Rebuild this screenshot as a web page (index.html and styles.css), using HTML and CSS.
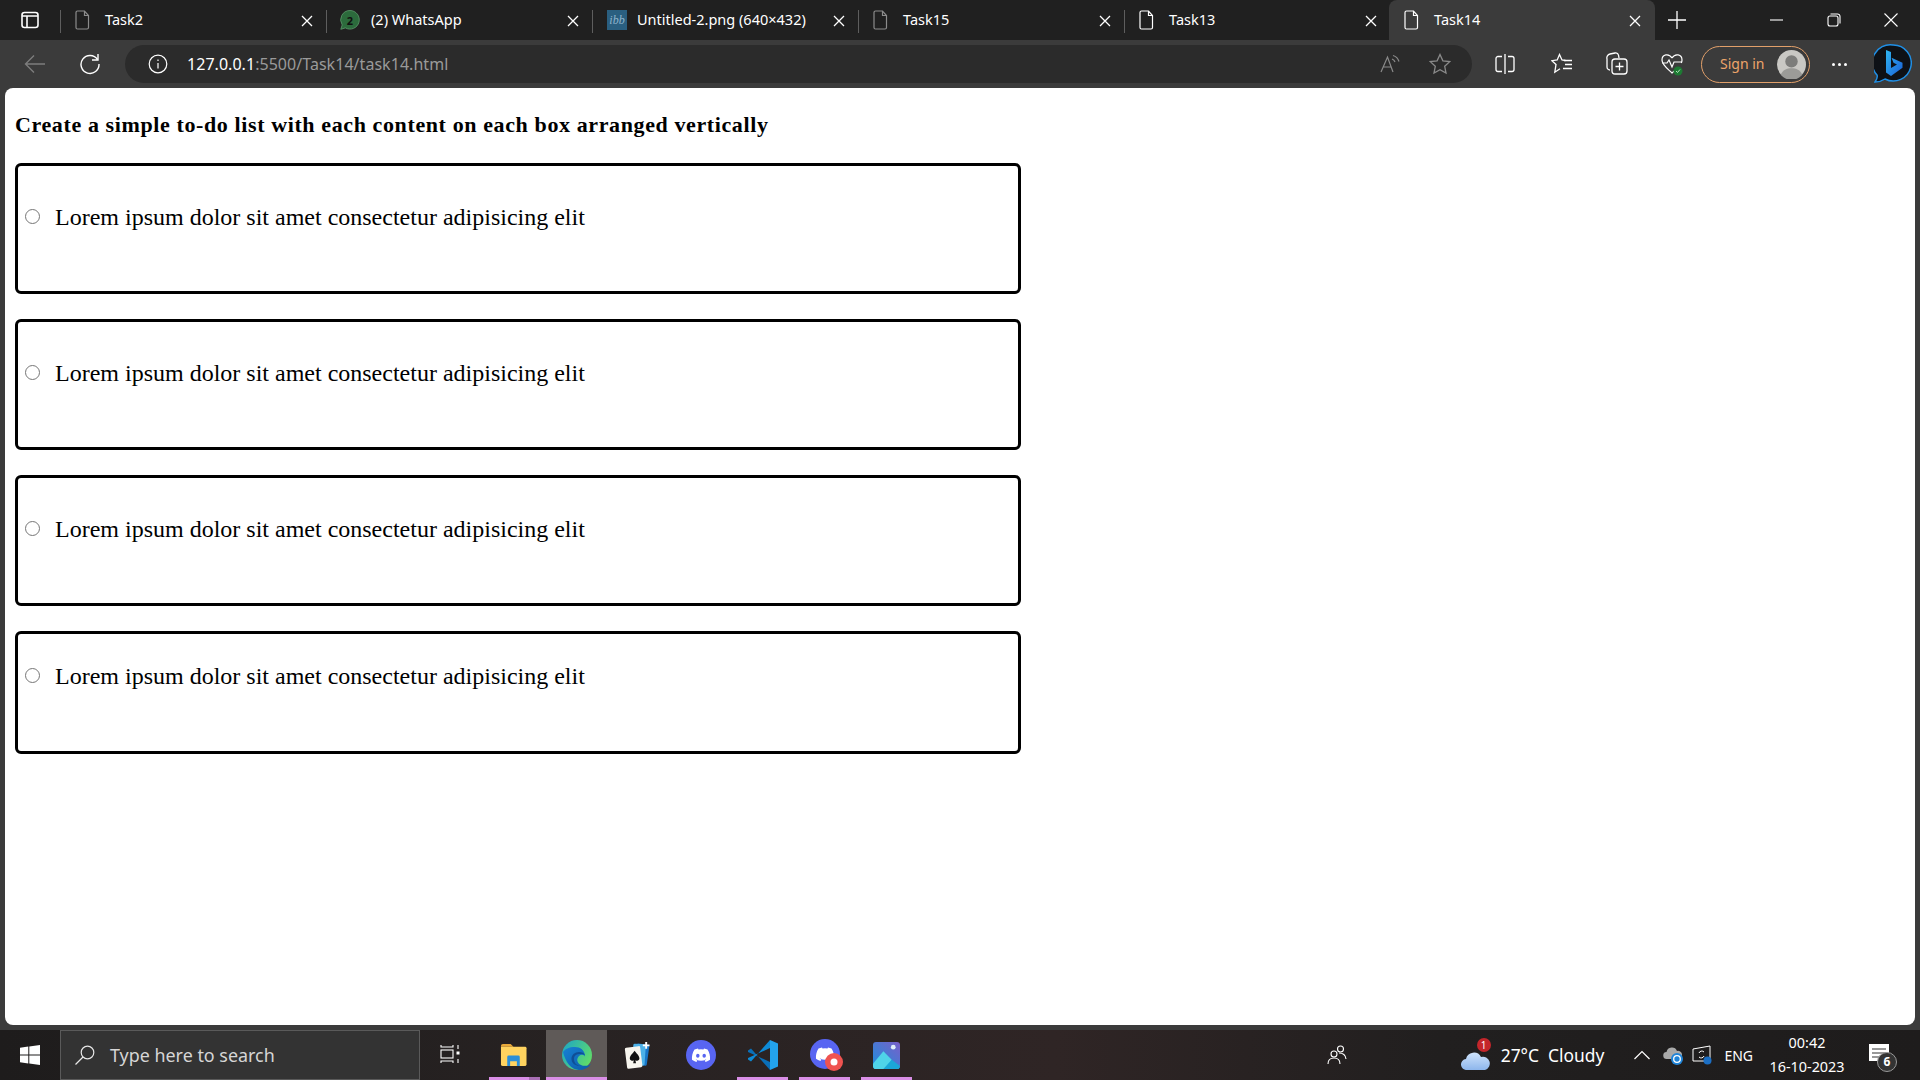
FILE: index.html
```html
<!DOCTYPE html>
<html lang="en">
<head>
<meta charset="utf-8">
<title>Task14</title>
<link rel="stylesheet" href="styles.css">
</head>
<body>
<div class="screen">
  <div class="tabstrip">
    <div class="strip-start">
      <svg class="ico20" viewBox="0 0 20 20" fill="none" stroke="#fff" stroke-width="1.6"><rect x="2" y="2.5" width="16" height="15" rx="2.5"/><path d="M2 6h16M7 6v11.5" /></svg>
    </div>
    <div class="tab">
      <svg class="tab-ico dim" viewBox="0 0 16 20" fill="none" stroke="currentColor" stroke-width="1.2"><path d="M2.500 1h7l4 4.500V17.500a1.500 1.500 0 0 1-1.500 1.500H2.500A1.500 1.500 0 0 1 1 17.500V2.500A1.500 1.500 0 0 1 2.500 1zM9.500 1v4.500h4"/></svg>
      <span class="tab-title">Task2</span>
      <svg class="tab-x" viewBox="0 0 12 12" stroke="#fff" stroke-width="1.300"><path d="M1 1l10 10M11 1L1 11"/></svg>
    </div>
    <div class="tab">
      <svg class="tab-ico wide" viewBox="0 0 20 20"><path d="M10 .5a9.300 9.300 0 1 1-4.600 17.400L.8 19.300l1.400-4.400A9.300 9.300 0 0 1 10 .5z" fill="#2c6b3c" stroke="#5d9a6c" stroke-width=".8"/><text x="10" y="14.500" class="wa-num">2</text></svg>
      <span class="tab-title">(2) WhatsApp</span>
      <svg class="tab-x" viewBox="0 0 12 12" stroke="#fff" stroke-width="1.300"><path d="M1 1l10 10M11 1L1 11"/></svg>
    </div>
    <div class="tab">
      <span class="ibb">ibb</span>
      <span class="tab-title">Untitled-2.png (640×432)</span>
      <svg class="tab-x" viewBox="0 0 12 12" stroke="#fff" stroke-width="1.300"><path d="M1 1l10 10M11 1L1 11"/></svg>
    </div>
    <div class="tab">
      <svg class="tab-ico dim" viewBox="0 0 16 20" fill="none" stroke="currentColor" stroke-width="1.200"><path d="M2.500 1h7l4 4.500V17.500a1.500 1.500 0 0 1-1.500 1.500H2.500A1.500 1.500 0 0 1 1 17.500V2.500A1.500 1.500 0 0 1 2.500 1zM9.500 1v4.500h4"/></svg>
      <span class="tab-title">Task15</span>
      <svg class="tab-x" viewBox="0 0 12 12" stroke="#fff" stroke-width="1.300"><path d="M1 1l10 10M11 1L1 11"/></svg>
    </div>
    <div class="tab tab-last">
      <svg class="tab-ico" viewBox="0 0 16 20" fill="none" stroke="currentColor" stroke-width="1.200"><path d="M2.500 1h7l4 4.500V17.500a1.500 1.500 0 0 1-1.500 1.500H2.500A1.500 1.500 0 0 1 1 17.500V2.500A1.500 1.500 0 0 1 2.500 1zM9.500 1v4.500h4"/></svg>
      <span class="tab-title">Task13</span>
      <svg class="tab-x" viewBox="0 0 12 12" stroke="#fff" stroke-width="1.300"><path d="M1 1l10 10M11 1L1 11"/></svg>
    </div>
    <div class="tab tab-active">
      <svg class="tab-ico" viewBox="0 0 16 20" fill="none" stroke="currentColor" stroke-width="1.200"><path d="M2.500 1h7l4 4.500V17.500a1.500 1.500 0 0 1-1.500 1.500H2.500A1.500 1.500 0 0 1 1 17.500V2.500A1.500 1.500 0 0 1 2.500 1zM9.500 1v4.500h4"/></svg>
      <span class="tab-title">Task14</span>
      <svg class="tab-x" viewBox="0 0 12 12" stroke="#fff" stroke-width="1.300"><path d="M1 1l10 10M11 1L1 11"/></svg>
    </div>
    <svg class="new-tab" viewBox="0 0 18 18" stroke="#fff" stroke-width="1.300"><path d="M9 0v18M0 9h18"/></svg>
    <div class="win-controls">
      <svg class="win-btn" viewBox="0 0 14 14" stroke="#fff" stroke-width="1.100"><path d="M0 7h13"/></svg>
      <svg class="win-btn" viewBox="0 0 14 14" fill="none" stroke="#fff" stroke-width="1.100"><rect x="1" y="3" width="10" height="10" rx="2"/><path d="M3.500 1h7a2.500 2.500 0 0 1 2.500 2.500v7"/></svg>
      <svg class="win-btn" viewBox="0 0 14 14" stroke="#fff" stroke-width="1.100"><path d="M.5.500l13 13M13.500.500l-13 13"/></svg>
    </div>
  </div>

  <div class="toolbar">
    <svg class="back" viewBox="0 0 22 20" fill="none" stroke="#7d7d7d" stroke-width="1.400"><path d="M21 10H1.500M10 1.500L1.500 10l8.500 8.500"/></svg>
    <svg class="reload" viewBox="0 0 22 22" fill="none" stroke="#fff" stroke-width="1.400"><path d="M18.500 6.500A9 9 0 1 0 20 11"/><path d="M19 1v6h-6"/></svg>
    <div class="address">
      <svg class="info" viewBox="0 0 20 20" fill="none" stroke="#fff" stroke-width="1.200"><circle cx="10" cy="10" r="8.800"/><path d="M10 9v5.500M10 5.500v1.500"/></svg>
      <span class="url"><span class="url-host">127.0.0.1</span>:5500/Task14/task14.html</span>
      <span class="address-end">
        <svg class="read" viewBox="0 0 22 20" fill="none" stroke="#8a8a8a" stroke-width="1.200"><path d="M1 18L7.500 3 13 18M3.500 13h8"/><path d="M12 5a5 5 0 0 1 3 3M13 1.500a9 9 0 0 1 6 6"/></svg>
        <svg class="star" viewBox="0 0 22 22" fill="none" stroke="#8a8a8a" stroke-width="1.300"><path d="M11 1.500l2.900 6.300 6.800.8-5 4.700 1.300 6.800L11 16.700l-6 3.400 1.300-6.800-5-4.700 6.800-.8z"/></svg>
      </span>
    </div>
    <svg class="tool split" viewBox="0 0 20 22" fill="none" stroke="#fff" stroke-width="1.300"><path d="M7 3.500H3a2 2 0 0 0-2 2v11a2 2 0 0 0 2 2h4M13 3.500h4a2 2 0 0 1 2 2v11a2 2 0 0 1-2 2h-4M10 1v20"/></svg>
    <svg class="tool fav" viewBox="0 0 22 22" fill="none" stroke="#fff" stroke-width="1.300"><path d="M14.500 7.500L11 7 8.500 1.500 6.200 7 1 7.700l4 3.700-1.200 7.800 5.200-3.400"/><path d="M13 7.500h8M14 11.500h7M12 15.500h9"/></svg>
    <svg class="tool coll" viewBox="0 0 22 24" fill="none" stroke="#fff" stroke-width="1.300"><path d="M4 18a3 3 0 0 1-3-3V7a4 4 0 0 1 3-5l5-1a3 3 0 0 1 3.500 2.200L13 6"/><rect x="6" y="7" width="15" height="15" rx="3"/><path d="M13.500 10.500v8M9.500 14.500h8"/></svg>
    <svg class="tool health" viewBox="0 0 22 24"><path d="M11 6C8 1 1 2 1 8c0 5 6 9 10 13 1-1 2-2 3-2.500M11 6c3-5 10-4 10 2 0 1-.2 2-.7 3" fill="none" stroke="#fff" stroke-width="1.200"/><path d="M1 11h5l2-3 3 7 2-5h8" fill="none" stroke="#fff" stroke-width="1.200"/><circle cx="17" cy="19" r="4.500" fill="#1d7a33"/><path d="M15 19l1.500 1.500 2.500-3" fill="none" stroke="#bfe8c6" stroke-width=".9"/></svg>
    <div class="signin">
      <span class="signin-label">Sign in</span>
      <span class="avatar"><svg viewBox="0 0 28 28"><circle cx="14" cy="14" r="14" fill="#c9c8c4"/><circle cx="14" cy="11" r="6" fill="#7d7d7b"/><path d="M3.500 24c2-5 6-6.500 10.500-6.500S22.500 19 24.500 24A14 14 0 0 1 3.500 24z" fill="#9b9b98"/></svg></span>
    </div>
    <span class="dots"><i></i><i></i><i></i></span>
    <svg class="bing" viewBox="0 0 38 40">
      <defs><linearGradient id="bingGrad" x1="0" y1="0" x2="1" y2="1"><stop offset="0" stop-color="#2fb6f2"/><stop offset="1" stop-color="#1a5fd6"/></linearGradient></defs>
      <path d="M19 1a18 18 0 1 1-8 34c-3 2-6 3-10 3 2-3 3-5 2-7A18 18 0 0 1 19 1z" fill="#0e1116" stroke="#1f8fe6" stroke-width="1.500"/>
      <path d="M12 6l5 2v16l6-3.500-3.500-1.700-2-5 11 5v5L17 32l-5-3.500z" fill="url(#bingGrad)"/>
    </svg>
  </div>

  <div class="page-wrap">
    <main class="page">
      <h3 class="heading">Create a simple to-do list with each content on each box arranged vertically</h3>
      <div class="todo-list">
        <label class="todo"><input class="todo-radio" type="radio" name="t1"><span>Lorem ipsum dolor sit amet consectetur adipisicing elit</span></label>
        <label class="todo"><input class="todo-radio" type="radio" name="t2"><span>Lorem ipsum dolor sit amet consectetur adipisicing elit</span></label>
        <label class="todo"><input class="todo-radio" type="radio" name="t3"><span>Lorem ipsum dolor sit amet consectetur adipisicing elit</span></label>
        <label class="todo todo-last"><input class="todo-radio" type="radio" name="t4"><span>Lorem ipsum dolor sit amet consectetur adipisicing elit</span></label>
      </div>
    </main>
  </div>

  <footer class="taskbar">
    <div class="start">
      <svg class="winlogo" viewBox="0 0 20 20" fill="#fff"><path d="M0 2.800L8.300 1.600v7.900H0zM9.300 1.500L20 0v9.500H9.300zM0 10.500h8.300v7.900L0 17.200zM9.300 10.500H20V20L9.300 18.500z"/></svg>
    </div>
    <div class="search">
      <svg class="search-ico" viewBox="0 0 20 20" fill="none" stroke="#e8e8e8" stroke-width="1.200"><circle cx="12.500" cy="7.500" r="6.300"/><path d="M8 12L.5 19.500"/></svg>
      <span class="search-text">Type here to search</span>
    </div>
    <svg class="taskview" viewBox="0 0 20 20" fill="none" stroke="#fff" stroke-width="1.100"><path d="M1 1v2h12V1M1 19v-2h12v2"/><rect x="1" y="6" width="12" height="8"/><path d="M18 1v4M18 15v4"/><rect x="16.500" y="7.500" width="3" height="3" fill="#fff" stroke="none"/></svg>

    <div class="apps">
      <div class="app app-folder">
        <svg class="app-ico" viewBox="0 0 28 26"><path d="M1 3a2 2 0 0 1 2-2h8l3 3H1z" fill="#e8a93a"/><path d="M1 4h25a1.500 1.500 0 0 1 1.500 1.500V22a2 2 0 0 1-2 2H3a2 2 0 0 1-2-2z" fill="#ffd35f"/><path d="M9 13h10a1.500 1.500 0 0 1 1.500 1.500V24h-3v-5h-7v5h-3v-9.500A1.500 1.500 0 0 1 9 13z" fill="#2b8fd8"/></svg>
      </div>
      <div class="app app-edge">
        <svg class="app-ico ico30" viewBox="0 0 30 30">
          <defs><linearGradient id="edgeA" x1="0" y1="0" x2="1" y2=".6"><stop offset="0" stop-color="#1aa3c9"/><stop offset="1" stop-color="#5fdc6a"/></linearGradient><linearGradient id="edgeB" x1="0" y1="0" x2="1" y2="1"><stop offset="0" stop-color="#1781d4"/><stop offset="1" stop-color="#0c5ba8"/></linearGradient></defs>
          <circle cx="15" cy="15" r="15" fill="url(#edgeA)"/>
          <path d="M1 12C3 21 9 30 17 30c5 0 9-2 12-6-3 2-7 2.500-10 1-4-2-5-6-2-9 2-2 5-1.500 6 .5C23 10 18 7 13 7 7 7 3 9 1 12z" fill="url(#edgeB)"/>
          <path d="M12 19c0 4 3 7 7 6.500-4 1-9-1-9.500-6C9 15 13 12 17 12c3 0 5 1 6 3-3-1.500-11-2-11 4z" fill="#0f4f96"/>
        </svg>
      </div>
      <div class="app app-cards">
        <svg class="app-ico" viewBox="0 0 28 28"><rect x="12" y="2" width="13" height="22" rx="1.500" fill="#1877c9" transform="rotate(8 18 13)"/><rect x="9" y="2" width="13" height="22" rx="1.500" fill="#4cb1e8" transform="rotate(4 15 13)"/><rect x="2" y="5" width="16" height="22" rx="1.500" fill="#f7f5ee" transform="rotate(-7 10 16)"/><path d="M11 9c2 3 5 5 5 8a2.500 2.500 0 0 1-4.200 1.800L12.500 22h-3l.7-3.200A2.500 2.500 0 0 1 6 17c0-3 3-5 5-8z" fill="#111"/><path d="M23 0v7M19.500 3.500h7" stroke="#fff" stroke-width="2"/></svg>
      </div>
      <div class="app app-discord">
        <svg class="app-ico ico30" viewBox="0 0 30 30"><circle cx="15" cy="15" r="15" fill="#5865f2"/><path d="M21.500 9.500A15 15 0 0 0 18 8.400l-.5 1a14 14 0 0 0-5 0l-.5-1a15 15 0 0 0-3.500 1.100C6.300 13 5.700 16.400 6 19.800a15 15 0 0 0 4.400 2.200l1-1.500-1.700-.8.400-.3a10 10 0 0 0 9.800 0l.4.300-1.700.8 1 1.500a15 15 0 0 0 4.400-2.200c.4-4-.6-7.300-2.500-10.300zM11.800 17.700c-1 0-1.700-.9-1.700-2s.8-2 1.700-2 1.800.9 1.700 2c0 1.100-.8 2-1.700 2zm6.400 0c-1 0-1.700-.9-1.700-2s.8-2 1.700-2 1.800.9 1.700 2c0 1.100-.7 2-1.700 2z" fill="#fff"/></svg>
      </div>
      <div class="app app-code">
        <svg class="app-ico ico30" viewBox="0 0 30 30"><path d="M22 30L3 8.500 0 10.500V12L22 22z" fill="#0a6fb8" transform="translate(0 0)"/><path d="M22 0L3 21.500 0 19.500V18L22 8z" fill="#0d8ad6"/><path d="M22 0l8 3.500v23L22 30z" fill="#23a3ec"/></svg>
      </div>
      <div class="app app-discord2">
        <svg class="app-ico ico30 badged" viewBox="0 0 34 34"><circle cx="15" cy="15" r="15" fill="#5865f2"/><path d="M21.500 9.500A15 15 0 0 0 18 8.400l-.5 1a14 14 0 0 0-5 0l-.5-1a15 15 0 0 0-3.500 1.100C6.300 13 5.700 16.400 6 19.800a15 15 0 0 0 4.400 2.200l1-1.500-1.700-.8.400-.3a10 10 0 0 0 9.800 0l.4.300-1.700.8 1 1.500a15 15 0 0 0 4.400-2.200c.4-4-.6-7.300-2.500-10.300z" fill="#fff"/><circle cx="24" cy="23" r="9" fill="#ef5350"/><circle cx="24" cy="23" r="3.500" fill="#fff"/></svg>
      </div>
      <div class="app app-photos">
        <svg class="app-ico" viewBox="0 0 26 26"><defs><linearGradient id="photoBg" x1="0" y1="1" x2="1" y2="0"><stop offset="0" stop-color="#1b8fdc"/><stop offset="1" stop-color="#7a5fc9"/></linearGradient></defs><rect width="26" height="26" rx="3" fill="url(#photoBg)"/><circle cx="19.500" cy="5" r="2.300" fill="#dfeefa"/><path d="M0 21l10-12 8 8-5 9H3a3 3 0 0 1-3-3z" fill="#4fd4e8"/><path d="M10 26l8-9 8 6v0a3 3 0 0 1-3 3z" fill="#1ba7d8"/></svg>
      </div>
    </div>

    <div class="tray">
      <svg class="people" viewBox="0 0 20 20" fill="none" stroke="#fff" stroke-width="1.100"><circle cx="7" cy="9" r="3"/><path d="M1 19c0-4 2.500-6 6-6s6 2 6 6"/><circle cx="13.500" cy="4" r="3"/><path d="M12 8c4 0 6.500 2 7 6"/></svg>
      <div class="weather">
        <span class="cloud-wrap">
          <svg class="cloud" viewBox="0 0 30 22"><defs><linearGradient id="cloudG" x1="0" y1="0" x2="0" y2="1"><stop offset="0" stop-color="#cfe3fb"/><stop offset="1" stop-color="#8db6ec"/></linearGradient></defs><path d="M6 22a5.500 5.500 0 0 1-1-11 8 8 0 0 1 15-2 6.500 6.500 0 0 1 4 13z" fill="url(#cloudG)"/></svg>
          <span class="cloud-badge">1</span>
        </span>
        <span class="weather-text">27°C&nbsp; Cloudy</span>
      </div>
      <svg class="chevron" viewBox="0 0 16 10" fill="none" stroke="#fff" stroke-width="1.200"><path d="M.5 9L8 1.500 15.500 9"/></svg>
      <svg class="onedrive" viewBox="0 0 20 20"><path d="M4 14a3.500 3.500 0 0 1-.5-7A5.500 5.500 0 0 1 14 6a4 4 0 0 1 2 8z" fill="#a9a9a9"/><circle cx="14" cy="14" r="6" fill="#1f84d8"/><circle cx="14" cy="14" r="3.300" fill="none" stroke="#fff" stroke-width="1.300"/></svg>
      <svg class="display" viewBox="0 0 20 20" fill="none" stroke="#fff" stroke-width="1"><path d="M1 4l17-3v15H1z"/><path d="M7 8a3 3 0 0 1 5-1M12 11a3 3 0 0 1-5 1"/><circle cx="15.500" cy="15.500" r="4" fill="#1c6fc4" stroke="none"/></svg>
      <span class="lang">ENG</span>
      <div class="clock"><span>00:42</span><span>16-10-2023</span></div>
      <span class="notify">
        <svg class="notify-ico" viewBox="0 0 20 18"><path d="M0 0h20v17H0z" fill="#fff"/><path d="M3 5h14M3 9h14M3 13h9" stroke="#333" stroke-width="1.200"/></svg>
        <span class="notify-badge">6</span>
      </span>
    </div>
  </footer>
</div>
</body>
</html>
```
FILE: styles.css
```css
* { box-sizing: border-box; }
html, body { margin: 0; padding: 0; height: 100%; overflow: hidden; }
body { font-family: "Noto Sans", "Open Sans", sans-serif; color: #fff; }
svg { display: block; flex: none; }

.screen { width: 1920px; height: 1080px; display: flex; flex-direction: column; background: #3b3b3b; }

/* tab strip */
.tabstrip { height: 40px; background: #202020; display: flex; align-items: stretch; flex: none; }
.strip-start { width: 60px; display: flex; align-items: center; padding-left: 20px; }
.ico20 { width: 20px; height: 20px; }
.tab { width: 266px; position: relative; display: flex; align-items: center; padding-left: 15px; }
.tab::before { content: ""; position: absolute; left: 0; top: 10px; height: 23px; width: 1px; background: #5e5e5e; }
.tab-last { width: 265px; }
.tab-active::before { display: none; }
.tab-active { background: #3b3b3b; border-radius: 8px 8px 0 0; }
.tab-ico { width: 16px; height: 20px; color: #fff; }
.tab-ico.dim { color: #8c8c8c; }
.tab-ico.wide { width: 20px; height: 20px; margin-left: -1px; margin-right: -3px; }
.wa-num { font-size: 11px; font-weight: 700; fill: #111; text-anchor: middle; }
.ibb { width: 20px; height: 20px; background: #2a5f80; color: #8fb4cc; font: italic 12px/20px "Liberation Serif", serif; text-align: center; margin-right: -4px; }
.tab-title { margin: 0 0 2px 14px; font-size: 14.500px; color: #fff; white-space: nowrap; }
.tab-x { position: absolute; left: 241px; top: 15px; width: 12px; height: 12px; }
.tab-active .tab-x { left: 240px; }
.new-tab { width: 18px; height: 18px; margin: 11px 0 0 13px; }
.win-controls { margin-left: auto; display: flex; align-items: center; gap: 43px; padding-right: 22px; }
.win-btn { width: 14px; height: 14px; }

/* toolbar */
.toolbar { height: 48px; flex: none; display: flex; align-items: center; padding-left: 24px; }
.back { width: 22px; height: 20px; }
.reload { width: 22px; height: 22px; margin-left: 33px; }
.address { width: 1347px; height: 38px; margin-left: 24px; background: #2b2b2b; border-radius: 19px; display: flex; align-items: center; padding-left: 23px; }
.info { width: 20px; height: 20px; }
.url { margin-left: 19px; font-size: 16px; color: #9a9a9a; letter-spacing: .04px; white-space: nowrap; }
.url-host { color: #fff; }
.address-end { margin-left: auto; display: flex; align-items: center; gap: 27px; padding-right: 21px; }
.read { width: 22px; height: 20px; }
.star { width: 22px; height: 22px; }
.tool { height: 22px; width: 22px; }
.split { margin-left: 23px; width: 20px; }
.fav { margin-left: 36px; }
.coll { margin-left: 33px; height: 24px; }
.health { margin-left: 33px; height: 24px; }
.signin { width: 109px; height: 37px; margin-left: 18px; border: 1.500px solid #e2a06a; border-radius: 19px; display: flex; align-items: center; justify-content: space-between; padding: 0 3px 0 18px; }
.signin-label { font-size: 14px; color: #eea56a; margin-bottom: 2px; }
.avatar { width: 29px; height: 29px; }
.dots { display: flex; gap: 3px; margin-left: 22px; }
.dots i { display: block; width: 3px; height: 3px; border-radius: 50%; background: #fff; }
.bing { width: 38px; height: 40px; margin-left: 27px; }

/* page */
.page-wrap { flex: 1; min-height: 0; padding: 0 5px 5px; display: flex; }
.page { flex: 1; background: #fff; border-radius: 8px; color: #000; font-family: "Liberation Serif", "Times New Roman", serif; padding: 0 10px; }
.heading { margin: 0; padding-top: 24px; font-size: 22px; line-height: 25px; font-weight: 700; white-space: nowrap; letter-spacing: .61px; }
.todo-list { width: 1006px; margin-top: 26px; display: flex; flex-direction: column; gap: 25px; }
.todo { height: 131px; border: 3px solid #000; border-radius: 6px; display: flex; align-items: flex-start; padding: 37px 0 0 7px; font-size: 24px; line-height: 28px; }
.todo-last { height: 123px; padding-top: 28px; }
.todo-radio { appearance: none; -webkit-appearance: none; margin: 6px 15px 0 0; width: 15px; height: 15px; border: 1.500px solid #767676; border-radius: 50%; background: #fff; flex: none; }

/* taskbar */
.taskbar { height: 50px; flex: none; display: flex; align-items: stretch; background: linear-gradient(90deg, #1e1c1c 0%, #272222 30%, #2f2525 55%, #211f1f 75%, #1e1c1c 100%); }
.start { width: 60px; display: flex; align-items: center; justify-content: center; }
.winlogo { width: 20px; height: 20px; }
.search { width: 360px; background: #333; border: 1px solid #5a5a5a; display: flex; align-items: center; padding-left: 14px; }
.search-ico { width: 20px; height: 20px; }
.search-text { margin-left: 15px; font-size: 17.900px; color: #d6d6d6; white-space: nowrap; }
.taskview { width: 20px; height: 20px; margin: 14px 0 0 20px; }
.apps { margin-left: 29px; display: flex; }
.app { position: relative; width: 61px; display: flex; align-items: center; justify-content: center; }
.app::after { content: ""; position: absolute; left: 0; right: 0; bottom: 0; height: 3px; background: #d98ee6; }
.app-folder { width: 57px; padding-right: 8px; }
.app-folder::after { background: linear-gradient(90deg, #d98ee6 0 40px, #a96fb4 40px); right: 6px; }
.app-edge { background: #5f5a58; }
.app-cards::after, .app-discord::after { display: none; }
.app-discord { padding-left: 4px; }
.app-code, .app-discord2, .app-photos { width: 51px; margin-right: 11px; }
.app-code { margin-left: 8px; }
.app-ico { width: 27px; height: 27px; }
.ico30 { width: 30px; height: 30px; }
.badged { width: 34px; height: 34px; margin: 2px 0 0 4px; }
.tray { margin-left: auto; display: flex; align-items: center; padding-right: 29px; }
.people { width: 20px; height: 20px; }
.weather { display: flex; align-items: center; margin-left: 114px; }
.cloud-wrap { position: relative; width: 30px; height: 30px; display: flex; align-items: flex-end; }
.cloud { width: 30px; height: 22px; }
.cloud-badge { position: absolute; right: 0; top: -2px; width: 14px; height: 14px; border-radius: 50%; background: #c4262b; color: #fff; font-size: 10px; line-height: 14px; text-align: center; }
.weather-text { margin-left: 10px; font-size: 17.400px; color: #fff; white-space: nowrap; }
.chevron { width: 16px; height: 10px; margin-left: 30px; }
.onedrive { width: 20px; height: 20px; margin-left: 13px; }
.display { width: 20px; height: 20px; margin-left: 9px; }
.lang { margin-left: 12px; font-size: 14px; color: #fff; }
.clock { margin-left: 16px; width: 76px; display: flex; flex-direction: column; align-items: center; font-size: 14.400px; line-height: 24px; white-space: nowrap; }
.notify { position: relative; width: 22px; height: 22px; margin-left: 24px; }
.notify-ico { width: 20px; height: 18px; }
.notify-badge { position: absolute; left: 8px; top: 8px; width: 20px; height: 20px; border-radius: 50%; background: #333; border: 1px solid #999; color: #fff; font-size: 12px; font-weight: 700; line-height: 18px; text-align: center; }
```
